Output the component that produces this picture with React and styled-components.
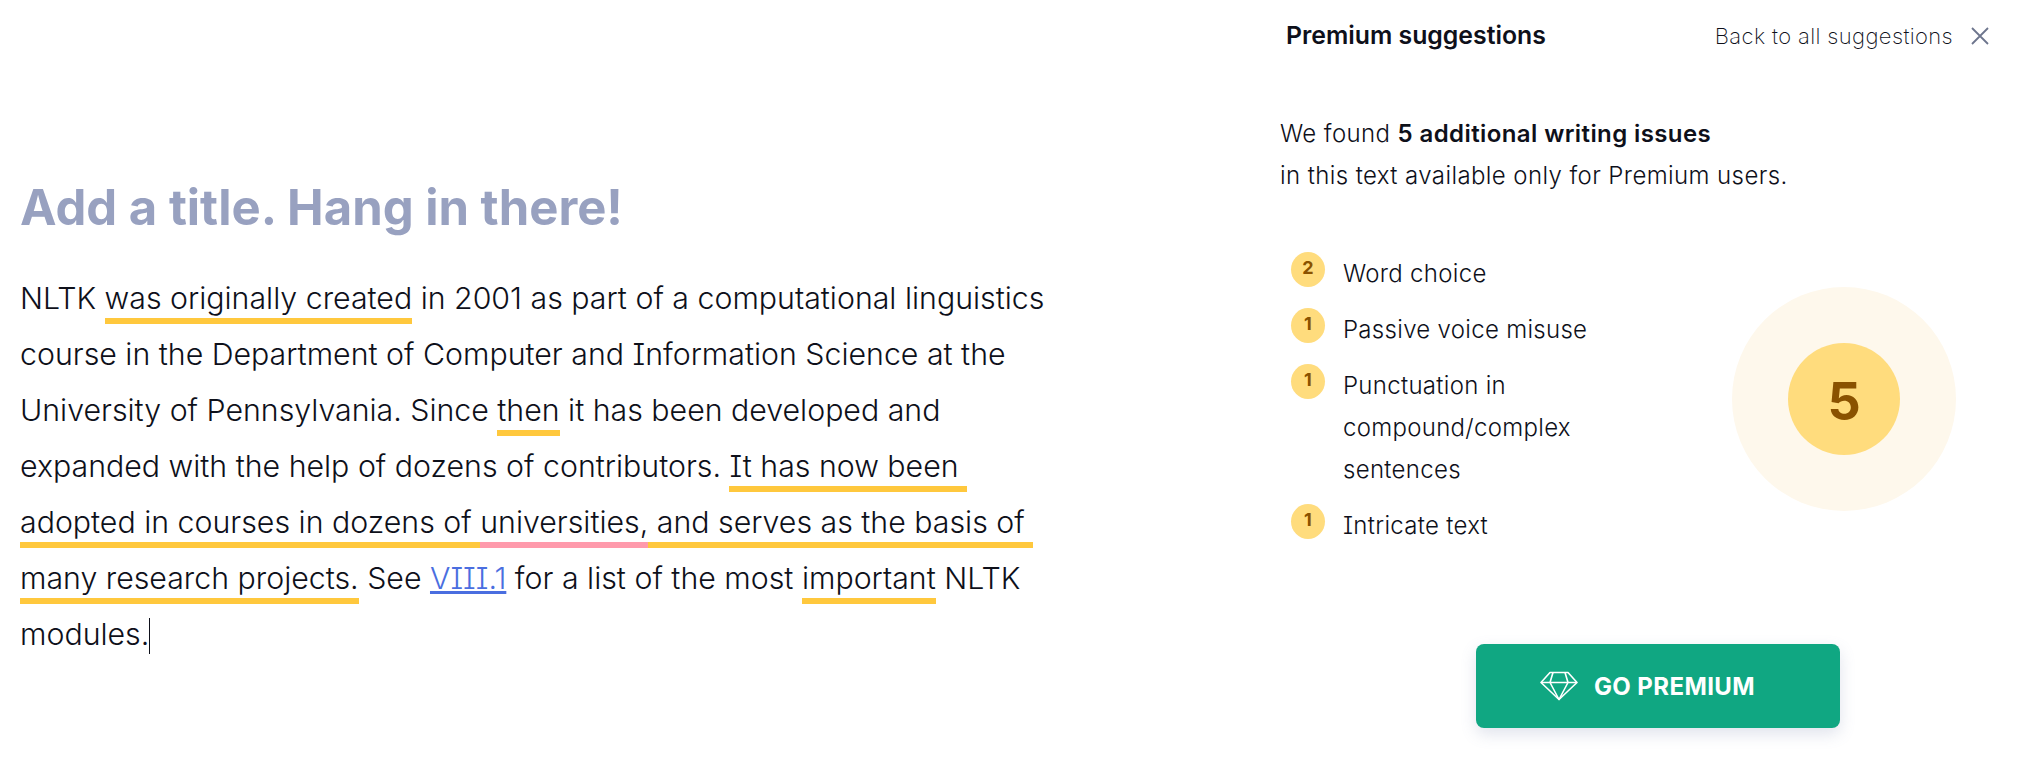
import React from "react";
import styled, { createGlobalStyle } from "styled-components";

const GlobalStyle = createGlobalStyle`
    html, body {
        margin: 0;
        padding: 0;
        background: #fff;
    }
    body {
        font-family: Inter, "Liberation Sans", sans-serif;
        font-feature-settings: "cv08";
        color: #0e101a;
        overflow: hidden;
    }
`

const Page = styled.div`
    width: 2031px;
    height: 757px;
    display: flex;
    overflow: hidden;
`
const Editor = styled.div`
    width: 1280px;
    box-sizing: border-box;
    padding: 172px 0 0 20px;
`
const Title = styled.h1`
    margin: 0 0 26px;
    font-size: 49px;
    line-height: 72px;
    font-weight: 700;
    color: #98a1c0;
`
const Body = styled.p`
    margin: 0;
    width: 1060px;
    font-size: 30.3px;
    font-weight: 350;
    line-height: 56px;
    white-space: pre-wrap;
`
const Mark = styled.span`
    padding-bottom: 8px;
    background: linear-gradient(${(p) => p.$color || "#ffc83d"}, ${(p) => p.$color || "#ffc83d"}) left bottom / 100% 6px no-repeat;
`
const Link = styled.a`
    color: #4a6ee0;
    text-decoration: underline;
`
const Caret = styled.span`
    display: inline-block;
    width: 1px;
    height: 36px;
    margin-right: -1px;
    background: #0e101a;
    vertical-align: -9px;
`
const Panel = styled.aside`
    flex: 1;
    display: flex;
    flex-direction: column;
`
const PanelHeader = styled.header`
    display: flex;
    align-items: center;
    justify-content: space-between;
    height: 70px;
    padding: 0 41px 0 6px;
`
const PanelTitle = styled.h2`
    margin: 0 0 1px;
    font-size: 24.8px;
    font-weight: 600;
`
const BackLink = styled.div`
    display: flex;
    align-items: center;
    gap: 17px;
    padding-top: 2px;
    font-size: 22px;
    font-weight: 250;
    letter-spacing: 0.37px;
    color: #0e101a;
`
const Intro = styled.p`
    margin: 43px 0 0;
    font-size: 24px;
    font-weight: 350;
    letter-spacing: 0.4px;
    line-height: 42px;
    strong {
        font-weight: 600;
        letter-spacing: 0.4px;
    }
`
const Summary = styled.div`
    display: flex;
    justify-content: space-between;
    margin-top: 55px;
    padding: 0 75px 0 11px;
`
const IssueList = styled.ul`
    list-style: none;
    margin: 0;
    padding: 0;
    width: 300px;
    display: flex;
    flex-direction: column;
    gap: 13px;
`
const Issue = styled.li`
    display: flex;
    gap: 18px;
    font-size: 24px;
    font-weight: 350;
    letter-spacing: 0.3px;
    line-height: 42px;
`
const IssueLabel = styled.span`
    padding-top: 1px;
`
const Count = styled.span`
    flex: none;
    width: 34px;
    height: 35px;
    border-radius: 50%;
    background: #ffdc7d;
    color: #8a5200;
    font-size: 18px;
    font-weight: 700;
    line-height: 32px;
    text-align: center;
`
const Gauge = styled.div`
    flex: none;
    width: 224px;
    height: 224px;
    margin-top: 35px;
    border-radius: 50%;
    background: #fef8ec;
    display: flex;
    align-items: center;
    justify-content: center;
`
const GaugeCore = styled.div`
    width: 112px;
    height: 112px;
    box-sizing: border-box;
    padding-top: 5px;
    border-radius: 50%;
    background: #ffdc7d;
    color: #8a5200;
    font-size: 52px;
    font-weight: 700;
    display: flex;
    align-items: center;
    justify-content: center;
`
const PremiumButton = styled.button`
    align-self: flex-start;
    margin: 97px 0 0 196px;
    width: 364px;
    height: 84px;
    padding: 0 21px 0 0;
    border: none;
    border-radius: 8px;
    background: #10a782;
    color: #fff;
    font-family: inherit;
    font-size: 24px;
    font-weight: 700;
    letter-spacing: 0.4px;
    display: flex;
    align-items: center;
    justify-content: center;
    gap: 16px;
    box-shadow: 0 6px 16px rgba(98, 113, 160, 0.2);
`

const issues = [
    { count: 2, label: "Word choice" },
    { count: 1, label: "Passive voice misuse" },
    { count: 1, label: "Punctuation in compound/complex sentences" },
    { count: 1, label: "Intricate text" },
]

function CloseIcon() {
    return (
        <svg width="20" height="20" viewBox="0 0 20 20" fill="none" stroke="#6d758d" strokeWidth="1.8">
            <path d="M2 2l16 16M18 2L2 18" />
        </svg>
    )
}

function DiamondIcon() {
    return (
        <svg width="38" height="30" viewBox="0 0 38 30" fill="none" stroke="#fff" strokeWidth="1.6" strokeLinejoin="round">
            <path d="M10 1.500h18l9 10-18 17-18-17z" />
            <path d="M1.500 11.500h35M13 1.500l-3 10 9 17 9-17-3-10" />
        </svg>
    )
}

export default function App() {
    return (
        <Page>
            <GlobalStyle />
            <Editor>
                <Title>Add a title. Hang in there!</Title>
                <Body>
                    NLTK <Mark>was originally created</Mark> in 2001 as part of a computational linguistics course in the Department of Computer and Information Science at the University of Pennsylvania. Since <Mark>then</Mark> it has been developed and expanded with the help of dozens of contributors. <Mark>It has now been adopted in courses in dozens of </Mark><Mark $color="#ff9aac">universities,</Mark><Mark> and serves as the basis of many research projects.</Mark> See <Link href="#viii">VIII.1</Link> for a list of the most <Mark>important</Mark> NLTK modules.<Caret />
                </Body>
            </Editor>
            <Panel>
                <PanelHeader>
                    <PanelTitle>Premium suggestions</PanelTitle>
                    <BackLink>
                        Back to all suggestions
                        <CloseIcon />
                    </BackLink>
                </PanelHeader>
                <Intro>
                    We found <strong>5 additional writing issues</strong>
                    <br />
                    in this text available only for Premium users.
                </Intro>
                <Summary>
                    <IssueList>
                        {issues.map((issue) => (
                            <Issue key={issue.label}>
                                <Count>{issue.count}</Count>
                                <IssueLabel>{issue.label}</IssueLabel>
                            </Issue>
                        ))}
                    </IssueList>
                    <Gauge>
                        <GaugeCore>5</GaugeCore>
                    </Gauge>
                </Summary>
                <PremiumButton>
                    <DiamondIcon />
                    GO PREMIUM
                </PremiumButton>
            </Panel>
        </Page>
    )
}
